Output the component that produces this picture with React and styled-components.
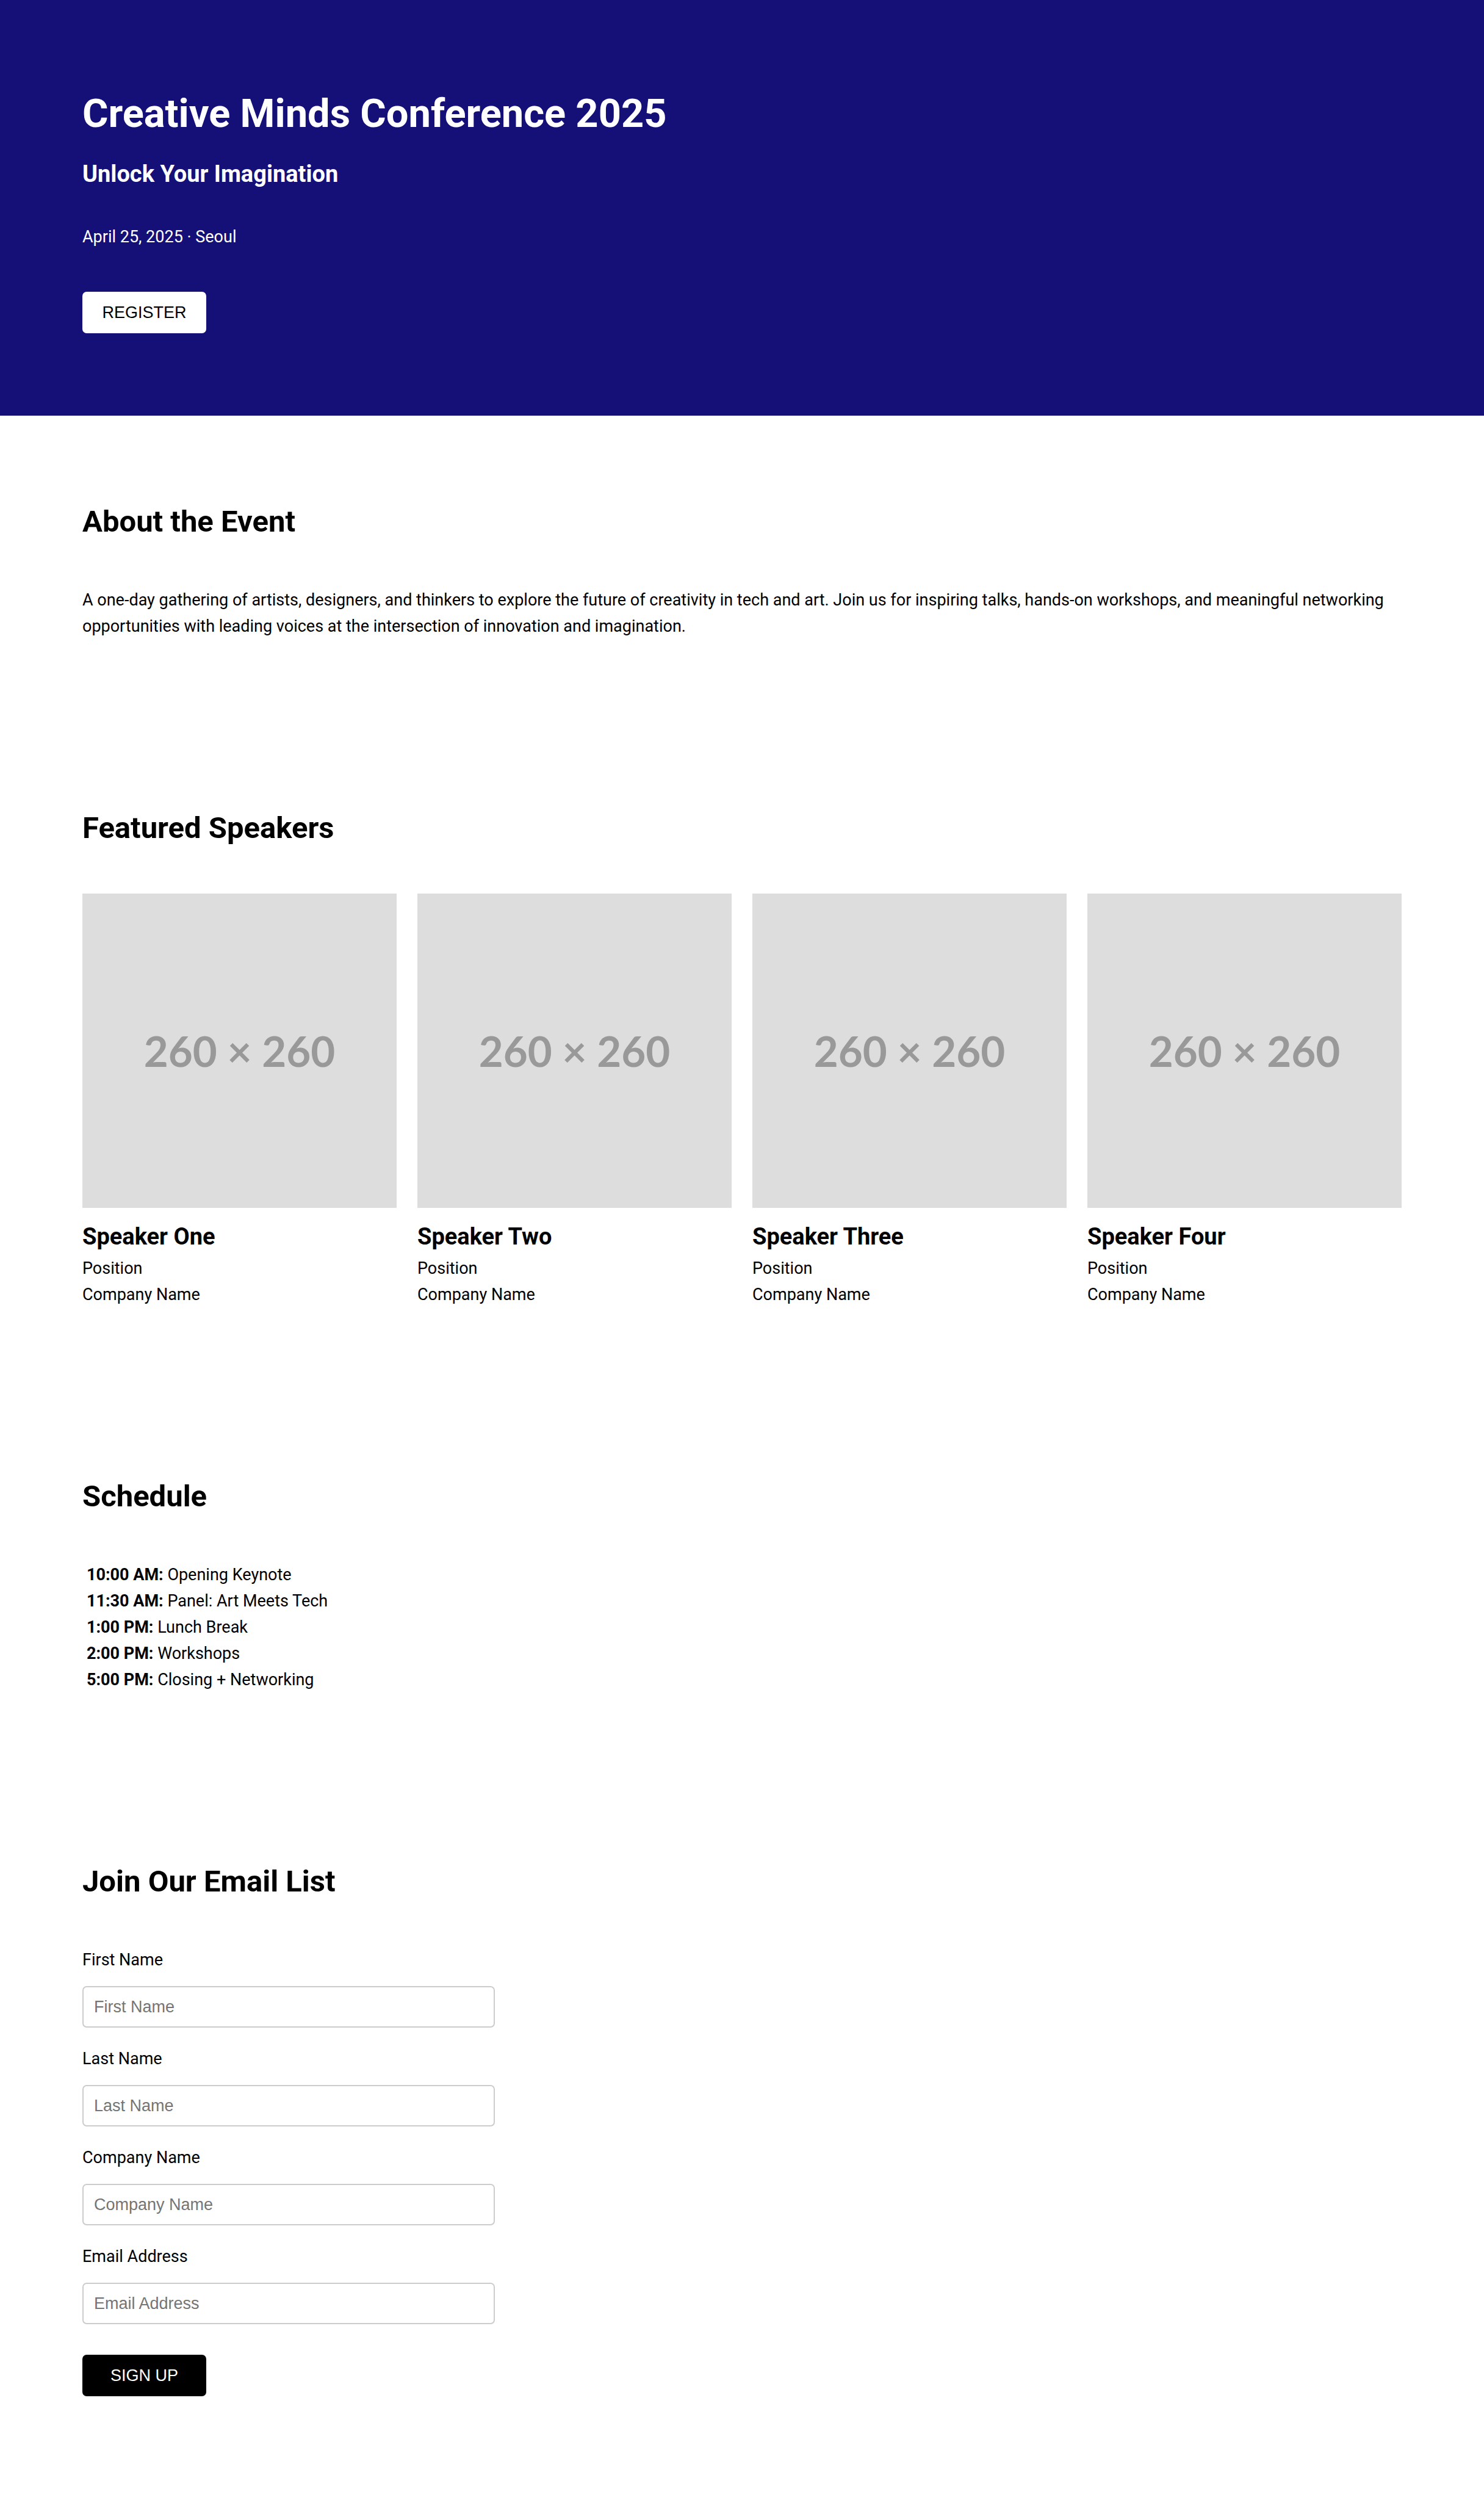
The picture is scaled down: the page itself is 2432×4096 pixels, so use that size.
import React from "react";
import styled, { createGlobalStyle } from "styled-components";

const GlobalStyle = createGlobalStyle`
  *, *::before, *::after {
    box-sizing: border-box;
  }
  body {
    margin: 0;
    background: #fff;
    color: #000;
    font-family: Roboto, "Liberation Sans", sans-serif;
    font-size: 27px;
    line-height: 43px;
  }
  h1, h2, h3, p, ul {
    margin: 0;
    padding: 0;
  }
`;

const Hero = styled.header`
  padding: 135px;
  background: #150f78;
  color: #fff;
`;

const HeroTitle = styled.h1`
  font-size: 65px;
  line-height: 103px;
  font-weight: 700;
`;

const Subheading = styled.h3`
  margin-top: 17px;
  font-size: 38px;
  line-height: 61px;
  font-weight: 700;
`;

const HeroMeta = styled.p`
  margin: 51px 0 68px;
`;

const Button = styled.button`
  display: block;
  width: 203px;
  height: 68px;
  padding: 0;
  border: 0;
  border-radius: 7px;
  background: ${(p) => (p.$dark ? "#000" : "#fff")};
  color: ${(p) => (p.$dark ? "#fff" : "#000")};
  font-family: "Liberation Sans", Arial, sans-serif;
  font-size: 27px;
  text-transform: uppercase;
  cursor: pointer;
`;

const Section = styled.section`
  padding: 135px;
`;

const SectionTitle = styled.h2`
  margin-bottom: 68px;
  font-size: 49px;
  line-height: 78px;
  font-weight: 700;
`;

const SpeakerGrid = styled.div`
  display: grid;
  grid-template-columns: repeat(4, 1fr);
  gap: 34px;
`;

const Portrait = styled.div`
  display: flex;
  align-items: center;
  justify-content: center;
  aspect-ratio: 1;
  background: #ddd;
  color: #999;
  font-family: Lato, sans-serif;
  font-size: 69px;
  line-height: 83px;
  font-weight: 700;
`;

const ScheduleList = styled.ul`
  padding: 0 7px;
  list-style: none;
`;

const SignupForm = styled.form`
  display: flex;
  flex-direction: column;
  align-items: flex-start;
  gap: 30px;
`;

const Field = styled.div`
  display: flex;
  flex-direction: column;
  gap: 21px;
  width: 676px;
  max-width: 100%;
`;

const TextInput = styled.input`
  width: 100%;
  height: 68px;
  padding: 0 17px;
  border: 2px solid #ccc;
  border-radius: 7px;
  background: #fff;
  font-family: "Liberation Sans", Arial, sans-serif;
  font-size: 27px;
  &::placeholder {
    color: #757575;
    opacity: 1;
  }
`;

const FormActions = styled.div`
  padding-top: 20px;
`;

const speakers = ["Speaker One", "Speaker Two", "Speaker Three", "Speaker Four"];

const schedule = [
  ["10:00 AM:", "Opening Keynote"],
  ["11:30 AM:", "Panel: Art Meets Tech"],
  ["1:00 PM:", "Lunch Break"],
  ["2:00 PM:", "Workshops"],
  ["5:00 PM:", "Closing + Networking"],
];

const fields = [
  { id: "first-name", label: "First Name", type: "text" },
  { id: "last-name", label: "Last Name", type: "text" },
  { id: "company", label: "Company Name", type: "text" },
  { id: "email", label: "Email Address", type: "email" },
];

export default function App() {
  return (
    <>
      <GlobalStyle />
      <Hero>
        <HeroTitle>Creative Minds Conference 2025</HeroTitle>
        <Subheading>Unlock Your Imagination</Subheading>
        <HeroMeta>April 25, 2025 · Seoul</HeroMeta>
        <Button type="button">Register</Button>
      </Hero>
      <main>
        <Section>
          <SectionTitle>About the Event</SectionTitle>
          <p>
            A one-day gathering of artists, designers, and thinkers to explore the future of
            creativity in tech and art. Join us for inspiring talks, hands-on workshops, and
            meaningful networking opportunities with leading voices at the intersection of
            innovation and imagination.
          </p>
        </Section>
        <Section>
          <SectionTitle>Featured Speakers</SectionTitle>
          <SpeakerGrid>
            {speakers.map((name) => (
              <article key={name}>
                <Portrait>260 × 260</Portrait>
                <Subheading>{name}</Subheading>
                <p>Position</p>
                <p>Company Name</p>
              </article>
            ))}
          </SpeakerGrid>
        </Section>
        <Section>
          <SectionTitle>Schedule</SectionTitle>
          <ScheduleList>
            {schedule.map(([time, title]) => (
              <li key={time}>
                <strong>{time}</strong> {title}
              </li>
            ))}
          </ScheduleList>
        </Section>
        <Section>
          <SectionTitle>Join Our Email List</SectionTitle>
          <SignupForm onSubmit={(e) => e.preventDefault()}>
            {fields.map((f) => (
              <Field key={f.id}>
                <label htmlFor={f.id}>{f.label}</label>
                <TextInput id={f.id} name={f.id} type={f.type} placeholder={f.label} />
              </Field>
            ))}
            <FormActions>
              <Button type="submit" $dark>
                Sign up
              </Button>
            </FormActions>
          </SignupForm>
        </Section>
      </main>
    </>
  );
}
